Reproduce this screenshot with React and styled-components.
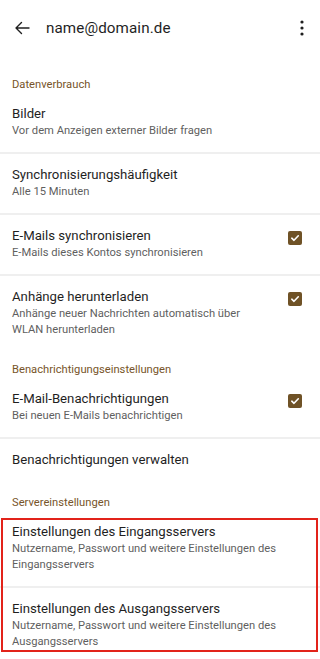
import styled, { createGlobalStyle } from 'styled-components';

const GlobalStyle = createGlobalStyle`
    html, body {
        margin: 0;
        padding: 0;
        background: #fff;
    }
    body {
        font-family: Roboto, "Noto Sans", "Liberation Sans", sans-serif;
        color: #1f1f1f;
        -webkit-font-smoothing: antialiased;
    }
    * {
        box-sizing: border-box;
    }
`;

const Page = styled.div`
    width: 320px;
    min-height: 659px;
    overflow: hidden;
`;

const TopBar = styled.header`
    height: 56px;
    display: flex;
    align-items: center;
    padding: 0 8px 0 12px;
`;

const IconButton = styled.div`
    width: 20px;
    height: 20px;
    display: flex;
    align-items: center;
    justify-content: center;
    color: #1f1f1f;
`;

const Title = styled.h1`
    flex: 1;
    margin: 0 0 0 14px;
    font-size: 15.2px;
    font-weight: 400;
    letter-spacing: 0.1px;
`;

const SectionHeader = styled.div`
    padding: ${p => (p.$first ? '22px' : '12px')} 12px 1px;
    font-size: 11.2px;
    line-height: 14px;
    color: #77552a;
`;

const Row = styled.div`
    display: flex;
    align-items: flex-start;
    padding: 12px 16px ${p => (p.$single ? '15px' : '13px')} 12px;
    border-bottom: ${p => (p.$divider ? '2px solid #efefef' : 'none')};
`;

const RowText = styled.div`
    flex: 1;
    min-width: 0;
`;

const RowTitle = styled.div`
    font-size: 13.2px;
    line-height: 18px;
    color: #1f1f1f;
`;

const RowSub = styled.div`
    font-size: 11.2px;
    line-height: 16px;
    color: #5f5f5f;
    padding-right: ${p => (p.$narrow ? '20px' : '0')};
`;

const Check = styled.div`
    width: 14px;
    height: 14px;
    margin: 4px 2px 0 16px;
    border-radius: 2px;
    background: #6f5226;
    display: flex;
    align-items: center;
    justify-content: center;
`;

const Marked = styled.div`
    position: relative;

    &::after {
        content: '';
        position: absolute;
        top: 7px;
        bottom: 13px;
        left: 1px;
        right: 2px;
        border: 2px solid #e2231a;
        pointer-events: none;
    }
`;

function CheckBox () {
    return (
        <Check>
            <svg width="10" height="10" viewBox="0 0 10 10">
                <path d="M1.8 5.2 L4 7.3 L8.3 2.8" fill="none" stroke="#fff" strokeWidth="1.6" strokeLinecap="round" strokeLinejoin="round" />
            </svg>
        </Check>
    )
}

function Setting ({ title, sub, checked, divider }) {
    return (
        <Row $divider={divider} $single={!sub}>
            <RowText>
                <RowTitle>{title}</RowTitle>
                {sub && <RowSub $narrow={checked}>{sub}</RowSub>}
            </RowText>
            {checked && <CheckBox />}
        </Row>
    )
}

export default function App () {
    return (
        <Page>
            <GlobalStyle />
            <TopBar>
                <IconButton>
                    <svg width="18" height="18" viewBox="0 0 18 18">
                        <path d="M16 9 H3 M8.5 3.5 L3 9 L8.5 14.5" fill="none" stroke="#1f1f1f" strokeWidth="1.4" strokeLinecap="round" strokeLinejoin="round" />
                    </svg>
                </IconButton>
                <Title>name@domain.de</Title>
                <IconButton>
                    <svg width="4" height="16" viewBox="0 0 4 16">
                        <circle cx="2" cy="2" r="1.6" fill="#1f1f1f" />
                        <circle cx="2" cy="8" r="1.6" fill="#1f1f1f" />
                        <circle cx="2" cy="14" r="1.6" fill="#1f1f1f" />
                    </svg>
                </IconButton>
            </TopBar>

            <SectionHeader $first>Datenverbrauch</SectionHeader>
            <Setting title="Bilder" sub="Vor dem Anzeigen externer Bilder fragen" divider />
            <Setting title="Synchronisierungshäufigkeit" sub="Alle 15 Minuten" divider />
            <Setting title="E-Mails synchronisieren" sub="E-Mails dieses Kontos synchronisieren" checked divider />
            <Setting title="Anhänge herunterladen" sub="Anhänge neuer Nachrichten automatisch über WLAN herunterladen" checked />

            <SectionHeader>Benachrichtigungseinstellungen</SectionHeader>
            <Setting title="E-Mail-Benachrichtigungen" sub="Bei neuen E-Mails benachrichtigen" checked divider />
            <Setting title="Benachrichtigungen verwalten" />

            <SectionHeader>Servereinstellungen</SectionHeader>
            <Marked>
                <Setting title="Einstellungen des Eingangsservers" sub="Nutzername, Passwort und weitere Einstellungen des Eingangsservers" divider />
                <Setting title="Einstellungen des Ausgangsservers" sub="Nutzername, Passwort und weitere Einstellungen des Ausgangsservers" divider />
            </Marked>
        </Page>
    )
}
